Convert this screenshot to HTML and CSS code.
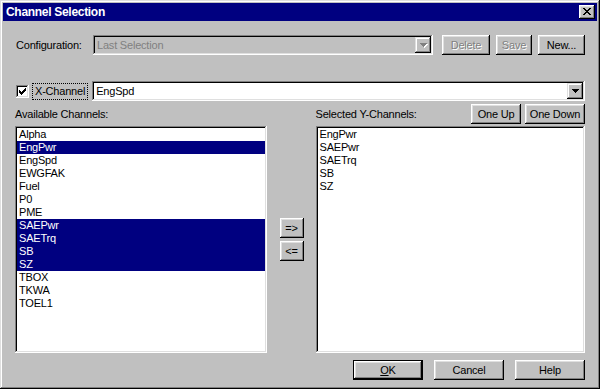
FILE: index.html
```html
<!DOCTYPE html>
<html lang="en">
<head>
    <meta charset="UTF-8">
    <title>Channel Selection</title>
    <link rel="stylesheet" href="styles.css">
</head>
<body>
<div class="window">
    <div class="titlebar">
        <span class="title">Channel Selection</span>
        <span class="close">
            <svg width="8" height="7" viewBox="0 0 8 7" shape-rendering="crispEdges"><path d="M0 0h2v1H0zM6 0h2v1H6zM1 1h2v1H1zM5 1h2v1H5zM2 2h4v1H2zM3 3h2v1H3zM2 4h4v1H2zM1 5h2v1H1zM5 5h2v1H5zM0 6h2v1H0zM6 6h2v1H6z" fill="#000"/></svg>
        </span>
    </div>

    <div class="content">
        <div class="config-row">
            <span class="config-label">Configuration:</span>
            <div class="combo combo-disabled config-combo">
                <span class="combo-text">Last Selection</span>
                <span class="drop">
                    <svg width="16" height="16" viewBox="0 0 16 16" shape-rendering="crispEdges">
                        <path d="M6 7h7v1H6zM7 8h5v1H7zM8 9h3v1H8zM9 10h1v1H9z" fill="#fff"/>
                        <path d="M5 6h7v1H5zM6 7h5v1H6zM7 8h3v1H7zM8 9h1v1H8z" fill="#808080"/>
                    </svg>
                </span>
            </div>
            <span class="btn btn-disabled btn-delete">Delete</span>
            <span class="btn btn-disabled btn-save">Save</span>
            <span class="btn btn-new">New...</span>
        </div>

        <div class="x-row">
            <span class="check">
                <svg width="7" height="7" viewBox="0 0 7 7" shape-rendering="crispEdges"><path d="M6 0h1v1H6zM5 1h2v1H5zM0 2h1v1H0zM4 2h3v1H4zM0 3h2v1H0zM3 3h3v1H3zM0 4h5v1H0zM1 5h3v1H1zM2 6h1v1H2z" fill="#000"/></svg>
            </span>
            <span class="focus-label">X-Channel</span>
            <div class="combo x-combo">
                <span class="combo-text">EngSpd</span>
                <span class="drop">
                    <svg width="16" height="16" viewBox="0 0 16 16" shape-rendering="crispEdges"><path d="M5 6h7v1H5zM6 7h5v1H6zM7 8h3v1H7zM8 9h1v1H8z" fill="#000"/></svg>
                </span>
            </div>
        </div>

        <div class="lists">
            <div class="col left-col">
                <div class="col-head">
                    <span>Available Channels:</span>
                </div>
                <ul class="listbox">
                    <li>Alpha</li>
                    <li class="sel">EngPwr</li>
                    <li>EngSpd</li>
                    <li>EWGFAK</li>
                    <li>Fuel</li>
                    <li>P0</li>
                    <li>PME</li>
                    <li class="sel">SAEPwr</li>
                    <li class="sel">SAETrq</li>
                    <li class="sel">SB</li>
                    <li class="sel">SZ</li>
                    <li>TBOX</li>
                    <li>TKWA</li>
                    <li>TOEL1</li>
                </ul>
            </div>

            <div class="mover">
                <span class="btn btn-move">=&gt;</span>
                <span class="btn btn-move">&lt;=</span>
            </div>

            <div class="col right-col">
                <div class="col-head">
                    <span>Selected Y-Channels:</span>
                    <div class="head-btns">
                        <span class="btn btn-up">One Up</span>
                        <span class="btn btn-down">One Down</span>
                    </div>
                </div>
                <ul class="listbox">
                    <li>EngPwr</li>
                    <li>SAEPwr</li>
                    <li>SAETrq</li>
                    <li>SB</li>
                    <li>SZ</li>
                </ul>
            </div>
        </div>

        <div class="footer">
            <span class="btn btn-footer btn-default"><u>O</u>K</span>
            <span class="btn btn-footer">Cancel</span>
            <span class="btn btn-footer">Help</span>
        </div>
    </div>
</div>
</body>
</html>
```

FILE: styles.css
```css
* {
    box-sizing: border-box;
}
body {
    margin: 0;
    font-family: "Liberation Sans", Arial, sans-serif;
    font-size: 11px;
    letter-spacing: -0.2px;
    color: #000;
    background-color: #c0c0c0;
}
.window {
    width: 600px;
    height: 389px;
    padding: 3px;
    background-color: #c0c0c0;
    box-shadow: inset -1px -1px #000, inset 1px 1px #dfdfdf, inset -2px -2px #808080, inset 2px 2px #fff;
    display: flex;
    flex-direction: column;
}
.titlebar {
    height: 18px;
    background-color: #000080;
    color: #fff;
    display: flex;
    align-items: center;
    justify-content: space-between;
    padding: 0 2px 0 3px;
}
.title {
    font-weight: bold;
    font-size: 12px;
    letter-spacing: -0.3px;
}
.close {
    width: 16px;
    height: 14px;
    background-color: #c0c0c0;
    box-shadow: inset -1px -1px #000, inset 1px 1px #fff, inset -2px -2px #808080, inset 2px 2px #dfdfdf;
    display: flex;
    align-items: center;
    justify-content: center;
    padding: 0 1px 1px 0;
}
.content {
    padding: 14px 12px 0 12px;
    display: flex;
    flex-direction: column;
}

/* raised button */
.btn {
    height: 20px;
    display: flex;
    align-items: center;
    justify-content: center;
    background-color: #c0c0c0;
    box-shadow: inset -1px -1px #000, inset 1px 1px #fff, inset -2px -2px #808080, inset 2px 2px #dfdfdf;
    padding-bottom: 1px;
}
.btn-disabled {
    color: #808080;
    text-shadow: 1px 1px #fff;
}

/* sunken field */
.combo, .listbox, .check {
    background-color: #fff;
    box-shadow: inset -1px -1px #fff, inset 1px 1px #808080, inset -2px -2px #dfdfdf, inset 2px 2px #000;
}
.combo {
    height: 20px;
    display: flex;
    align-items: center;
    justify-content: space-between;
    padding: 2px;
}
.combo-disabled {
    background-color: #c0c0c0;
    color: #808080;
}
.combo-text {
    padding-left: 2px;
}
.drop {
    width: 16px;
    height: 16px;
    display: flex;
    background-color: #c0c0c0;
    box-shadow: inset -1px -1px #000, inset 1px 1px #dfdfdf, inset -2px -2px #808080, inset 2px 2px #fff;
}

.config-row {
    height: 20px;
    display: flex;
    align-items: center;
}
.config-label {
    width: 78px;
    padding-left: 1px;
}
.config-combo {
    width: 340px;
}
.btn-delete {
    width: 48px;
    margin-left: 9px;
}
.btn-save {
    width: 36px;
    margin-left: 6px;
}
.btn-new {
    width: 47px;
    margin-left: 6px;
}

.x-row {
    height: 20px;
    margin-top: 26px;
    display: flex;
    align-items: center;
}
.check {
    width: 13px;
    height: 13px;
    margin-left: 1px;
    display: flex;
    align-items: center;
    justify-content: center;
}
.focus-label {
    height: 17px;
    margin-left: 3px;
    padding: 0 2px;
    border: 1px dotted #000;
    display: flex;
    align-items: center;
}
.x-combo {
    flex: 1;
    margin-left: 4px;
}

.lists {
    display: flex;
    margin-top: 3px;
}
.col {
    display: flex;
    flex-direction: column;
}
.left-col {
    width: 252px;
}
.right-col {
    width: 270px;
}
.col-head {
    height: 20px;
    margin-bottom: 2px;
    display: flex;
    align-items: center;
    justify-content: space-between;
}
.head-btns {
    display: flex;
    gap: 4px;
}
.btn-up {
    width: 50px;
}
.btn-down {
    width: 60px;
}
.listbox {
    list-style-type: none;
    margin: 0;
    padding: 2px;
    height: 227px;
    overflow: hidden;
}
.listbox li {
    height: 13px;
    line-height: 13px;
    padding-left: 2px;
}
.listbox li.sel {
    background-color: #000080;
    color: #fff;
}
.mover {
    width: 24px;
    margin: 22px 12px 0 13px;
    height: 227px;
    display: flex;
    flex-direction: column;
    justify-content: center;
    gap: 3px;
}
.btn-move {
    width: 24px;
}

.footer {
    display: flex;
    justify-content: flex-end;
    gap: 11px;
    margin-top: 7px;
}
.btn-footer {
    width: 70px;
}
.btn-default {
    border: 1px solid #000;
}
```
